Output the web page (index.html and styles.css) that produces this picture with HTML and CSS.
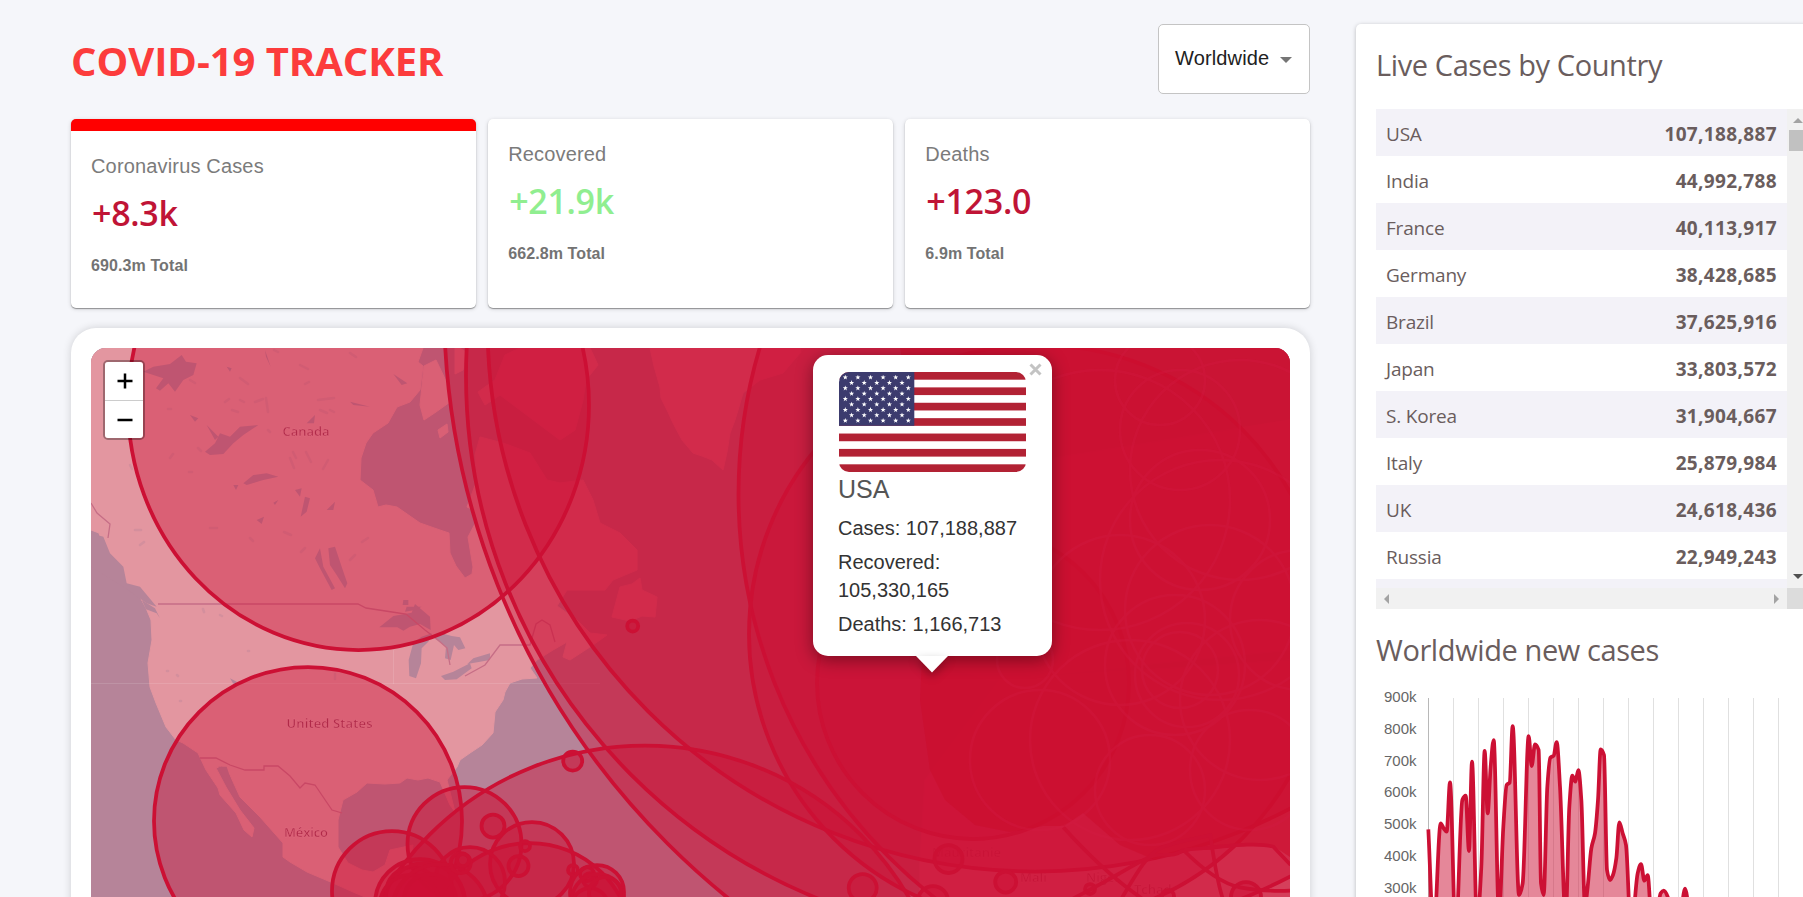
FILE: index.html
```html
<!DOCTYPE html>
<html lang="en">
<head>
<meta charset="utf-8">
<title>COVID-19 Tracker</title>
<link rel="stylesheet" href="styles.css">
</head>
<body>
<div class="app">
  <main class="main">
    <header class="header">
      <h1 class="brand">COVID-19 TRACKER</h1>
      <div class="select"><span>Worldwide</span><i class="caret"></i></div>
    </header>
    <section class="stats">
      <article class="card card-active">
        <p class="card-title">Coronavirus Cases</p>
        <h2 class="card-num">+8.3k</h2>
        <p class="card-total">690.3m Total</p>
      </article>
      <article class="card">
        <p class="card-title">Recovered</p>
        <h2 class="card-num green">+21.9k</h2>
        <p class="card-total">662.8m Total</p>
      </article>
      <article class="card">
        <p class="card-title">Deaths</p>
        <h2 class="card-num">+123.0</h2>
        <p class="card-total">6.9m Total</p>
      </article>
    </section>
    <section class="map-card">
      <div class="map">
        <svg class="map-svg" viewBox="91 348 1199 549" width="1199" height="549">
          <rect class="sea" x="91" y="348" width="1199" height="549"/>
          <path class="land" d="M91 348H423L418 362 423 366 420 390 410 402 397 407 388 423 373 433 366 443 361 458 360 480 373 490 378 507 386 505 397 507 420 523 440 530 449 533 450 553 456 566 465 578 472 574 473 567 468 537 477 520 474 510 467 507 477 480 475 455 480 437 503 443 530 453 547 480 560 483 583 480 593 500 600 523 620 533 637 550 637 570 613 580 605 590 567 590 557 606 577 620 590 633 607 635 593 645 570 660 563 657 567 642 553 650 537 660 530 668 537 678 522 679 510 683 505 692 503 700 495 712 493 733 482 745 470 753 460 760 457 767 447 780 455 812 450 805 440 782 428 778 418 780 407 778 400 783 385 784 367 783 357 792 343 800 338 820 338 847 348 863 362 870 373 872 385 865 390 850 413 845 410 863 412 875 440 890 440 897H365L353 892 333 883 307 872 290 862 283 857 283 843 260 817 240 797 230 775 222 766 216 768 226 787 240 810 254 828 252 837 244 830 236 813 220 795 218 788 206 770 198 753 183 743 176 740 166 727 156 703 150 687 148 663 152 640 151 620 146 608 140 597 125 583 120 567 103 547 99 533 91 530Z"/>
          <path class="land" d="M424 366 436 360 448 385 450 402 436 412 424 420 420 405ZM438 430 447 424 448 432 440 438ZM478 392 495 380 505 355 520 348H590L598 365 586 380 583 400 575 430 560 440 540 425 520 410 500 395 485 405ZM650 348 654 366 660 387 661 398 668 412 673 423 682 440 693 453 702 456 712 460 723 470 727 452 730 433 735 420 738 410 743 393 760 380 783 373 800 353 800 348ZM620 587 632 584 640 578 642 590 657 597 655 617 642 616 630 621 612 617ZM455 345 466 352 463 370 455 374ZM925 780 1000 680 1290 660V897H920V860ZM880 520 980 470 1290 420V650L990 680 900 650Z"/>
          <!-- Great Lakes and inland water -->
          <g class="sea" transform="translate(60 600) scale(.33333)">
            <path d="M958 82 1000 48 1055 38 1065 12 1110 50 1112 90 1080 72 1050 80 1030 92 1012 82ZM1046 180 1060 128 1085 110 1115 100 1105 125 1085 145 1083 190 1068 235 1048 228ZM1115 108 1145 100 1175 108 1200 112 1216 145 1195 150 1182 135 1172 180 1155 175 1158 140 1130 120ZM1143 228 1180 215 1230 190 1235 205 1190 238 1155 240ZM1222 192 1240 175 1290 160 1290 180ZM510 235 530 245 525 260ZM245 0 285 25 300 55 290 40 258 28ZM1030 0 1045 0 1045 15 1028 15Z"/>
            <path d="M475 500 500 500 520 560 505 565Z"/>
          </g>
          <g class="sea" transform="translate(60 320) scale(.33333)">
            <path d="M250 155 280 140 330 132 365 105 378 125 410 130 400 165 370 180 345 215 325 190 300 212 288 205 310 175ZM435 395 465 370 480 340 510 350 540 320 595 315 550 345 520 370 490 402 450 405ZM440 315 475 350 465 360ZM550 490 580 465 620 460 655 470 610 480 560 495ZM735 530 750 535 740 575 722 590ZM805 685 825 680 845 740 862 790 855 805 830 765 810 735ZM780 685 790 740 825 805 815 810 780 745 765 715ZM1000 162 1042 190 1025 195ZM740 310 765 285 762 310ZM870 245 930 260 880 255ZM390 285 415 295 405 305ZM500 140 515 145 510 155ZM615 90 632 140 618 110ZM640 548 655 540 645 555ZM590 600 612 590 605 612ZM800 570 825 545 820 570ZM1040 860 1085 860 1065 870 1035 875ZM705 510 725 505 720 530ZM520 495 535 495 528 510ZM93 640 130 650 150 700 190 740 200 790 240 800 290 860 260 850 190 800 93 740Z"/>
          </g>
          <g class="specks">
            <path d="M190 380l5 3M225 402l4-3M240 378l8 6M232 410l6 2M255 402l8-3M266 398l2 14M318 400l16-2M320 410l7 3M300 365l8 4M350 353l6 4M290 458l4 10M306 452l5 10M328 460l-5 9M198 448l3 3M168 409h3M170 458l3-4M189 472h3M284 532l7 3M210 528h7M362 542l6-4M350 560l5-5M274 350l4 2M240 400l4 2M250 538l3 3M135 530h6M140 545l4-3M305 548l-4 4M130 465l2 4M305 384l4-2M293 452l3 6M330 410l4 2M268 430l2 2M177 675l1 1M167 671h1M180 701h1M248 651h1M203 609l1 3M220 615l2 1M335 674v5"/>
          </g>
          <path class="border" d="M158 604H358L366 608 392 612 406 614 425 630 438 640 447 648 450 665M465 676 485 665 500 645H530L536 624 542 620 550 625 555 642M200 758H216L230 765 245 770H264V766H278L290 776 300 788 305 783 315 785 332 810 342 813M91 503 97 513 110 524 108 538"/>
          <path class="tile" d="M91 683.500H600M393.500 650V684"/>
          <g class="place">
            <text x="282.500" y="436" textLength="47">Canada</text>
            <text x="286.500" y="727.500" textLength="86">United States</text>
            <text x="284" y="837" textLength="44">México</text>
            <text x="1020" y="882">Mali</text><text x="1086" y="882">Niger</text><text x="1134" y="894">Tchad</text><text x="932" y="857">Mauritanie</text>
          </g>
          <g class="ring">
            <ellipse cx="358.500" cy="405" rx="230.500" ry="245"/>
            <circle cx="308" cy="821" r="154"/>
            <circle cx="1207" cy="304" r="763"/>
            <circle cx="1030" cy="376" r="564"/>
            <circle cx="1035" cy="324" r="547.500"/>
            <circle cx="1252" cy="494" r="513.500"/>
            <circle cx="1038" cy="634" r="289"/>
            <circle cx="645" cy="1050.500" r="305"/>
            <circle cx="464.500" cy="844" r="57"/>
            <circle cx="392" cy="891" r="60"/>
            <circle cx="532" cy="864" r="42"/>
            <circle cx="530" cy="945" r="102"/>
            <circle cx="470" cy="882" r="35"/>
            <circle cx="420" cy="904" r="45"/><circle cx="412" cy="893" r="26"/><circle cx="425" cy="903" r="40"/>
            <circle cx="410" cy="905" r="30"/><circle cx="430" cy="900" r="26"/><circle cx="440" cy="912" r="48"/>
            <circle cx="493" cy="826" r="11.500"/>
            <circle cx="572.700" cy="761" r="9.500"/>
            <circle cx="632.700" cy="626" r="5.500"/>
            <circle cx="460.700" cy="863" r="10"/><circle cx="463" cy="860" r="6"/>
            <circle cx="518.500" cy="866" r="10"/><circle cx="525" cy="846" r="5"/>
            <circle cx="573" cy="870" r="5"/><circle cx="587" cy="874" r="7"/><circle cx="590" cy="880" r="7"/>
            <circle cx="597" cy="892" r="27"/><circle cx="598" cy="900" r="26"/><circle cx="590" cy="906" r="18"/><circle cx="605" cy="893" r="16"/>
            <circle cx="862.700" cy="888" r="14"/>
            <circle cx="948.500" cy="859" r="14"/>
            <circle cx="1005.700" cy="882" r="10.500"/>
            <circle cx="933" cy="901" r="15"/>
            <circle cx="1090" cy="889" r="5"/>
            <circle cx="1168" cy="896" r="6"/>
            <circle cx="1246" cy="897" r="15"/>
          </g>
          <!-- overlapping European and African markers -->
          <circle class="soft" cx="973" cy="683" r="156"/>
          <path class="dense" d="M900 348H1290V857L1275 847 1250 844 1210 850 1180 850 1155 860 1120 845 1083 813 1064 826 1043 826 1010 832 975 825 945 800 930 770 920 700 925 600 930 520Z"/>
          <g class="arcs" transform="translate(840 600) scale(.33333)">
            <path d="M670 682C740 760 810 830 905 895M845 895C890 820 920 765 960 745S1080 715 1110 705M1110 700C1122 780 1130 840 1148 895M1030 750C1080 800 1140 850 1200 862S1300 874 1352 872M700 895C790 850 870 800 920 775S990 780 1030 750M1030 750C1150 740 1250 725 1300 740L1352 795"/>
          </g>
          <g class="curls">
            <circle cx="1180" cy="670" r="38"/><circle cx="1187" cy="675" r="52"/><circle cx="1175" cy="665" r="70"/><circle cx="1040" cy="760" r="70"/><circle cx="1130" cy="740" r="100"/><circle cx="1220" cy="580" r="120"/><circle cx="1200" cy="520" r="70"/><circle cx="1180" cy="430" r="60"/><circle cx="1240" cy="470" r="110"/><circle cx="1100" cy="500" r="130"/><circle cx="1260" cy="700" r="80"/><circle cx="1210" cy="610" r="85"/><circle cx="1120" cy="620" r="85"/><circle cx="1250" cy="770" r="60"/><circle cx="1160" cy="380" r="45"/><circle cx="1025" cy="660" r="28"/><circle cx="1150" cy="790" r="55"/><circle cx="1300" cy="620" r="70"/>
          </g>
        </svg>
        <div class="zoom">
          <span><svg width="16" height="16" viewBox="0 0 16 16"><path d="M8 .5V15.500M.5 8H15.500"/></svg></span>
          <span><svg width="16" height="16" viewBox="0 0 16 16"><path d="M.5 8H15.500"/></svg></span>
        </div>
        <div class="popup">
          <svg class="close" width="13" height="13" viewBox="0 0 13 13"><path d="M1.500 1.500 11.500 11.500M11.500 1.500 1.500 11.500"/></svg>
          <svg class="flag" width="187" height="100" viewBox="0 0 187 100" preserveAspectRatio="none">
            <rect width="187" height="100" fill="#fff"/>
            <g id="stripes" fill="#b22234"></g>
            <rect width="75.300" height="53.800" fill="#3c3b6e"/>
            <g id="stars" fill="#fff"></g>
          </svg>
          <p class="pop-name">USA</p>
          <p class="pop-line">Cases: 107,188,887</p>
          <p class="pop-line">Recovered: 105,330,165</p>
          <p class="pop-line">Deaths: 1,166,713</p>
          <svg class="tip" width="32" height="17" viewBox="0 0 32 17"><path d="M0 0H32L16 16.500Z" fill="#fff"/></svg>
        </div>
      </div>
    </section>
  </main>
  <aside class="side">
    <h3 class="side-title">Live Cases by Country</h3>
    <div class="table-wrap">
      <div class="rows">
        <div class="row"><span>USA</span><b>107,188,887</b></div>
        <div class="row"><span>India</span><b>44,992,788</b></div>
        <div class="row"><span>France</span><b>40,113,917</b></div>
        <div class="row"><span>Germany</span><b>38,428,685</b></div>
        <div class="row"><span>Brazil</span><b>37,625,916</b></div>
        <div class="row"><span>Japan</span><b>33,803,572</b></div>
        <div class="row"><span>S. Korea</span><b>31,904,667</b></div>
        <div class="row"><span>Italy</span><b>25,879,984</b></div>
        <div class="row"><span>UK</span><b>24,618,436</b></div>
        <div class="row"><span>Russia</span><b>22,949,243</b></div>
        <div class="row"></div>
      </div>
      <div class="vbar"><i class="up"></i><i class="thumb"></i><i class="down"></i></div>
      <div class="hbar"><i class="left"></i><i class="right"></i></div>
      <div class="corner"></div>
    </div>
    <h3 class="side-title second">Worldwide new cases</h3>
    <svg class="chart" width="427" height="217" viewBox="1376 680 427 217">
      <g id="grid"></g>
      <path id="area" class="area"/>
      <path id="line" class="line"/>
    </svg>
  </aside>
</div>
<script src="main.js"></script>
</body>
</html>
```
FILE: styles.css
```css
* { box-sizing: border-box; }
body { margin: 0; width: 1803px; height: 897px; overflow: hidden; background: #f5f6fa; font-family: "Liberation Sans", Arial, sans-serif; }
h1, h2, h3, p { margin: 0; }
.app { display: flex; height: 897px; padding: 24px 0 0 71px; overflow: hidden; }
.main { width: 1239px; flex: none; margin-right: 46px; }
.header { display: flex; justify-content: space-between; height: 95px; }
.brand { font: 700 40px/74px "Open Sans", "Noto Sans", sans-serif; color: #fc3c3c; letter-spacing: -0.050px; white-space: nowrap; }
.select { display: flex; align-items: center; width: 152px; height: 70px; padding: 0 17px 2px 16px; justify-content: space-between; background: #fff; border: 1px solid #c4c4c4; border-radius: 5px; font-size: 20px; letter-spacing: .15px; color: #212121; }
.caret { border: 6px solid transparent; border-top-color: #757575; border-bottom: 0; margin-top: 3px; }
.stats { display: flex; gap: 12.500px; }
.card { flex: 1; height: 189px; padding: 20px; background: #fff; border-radius: 5px; box-shadow: 0 1px 1px rgba(0,0,0,.35), 0 1px 4px rgba(0,0,0,.16); }
.card-active { border-top: 12px solid #f00; }
.card-title { font-size: 20px; line-height: 30px; letter-spacing: .16px; color: #7b7b7b; }
.card-num { margin: 8px 0 0 1px; font: 600 34px/48px "Open Sans", "Noto Sans", sans-serif; letter-spacing: -.3px; color: #c01436; }
.green { color: #90ee90; }
.card-total { margin-top: 18px; font-size: 16px; line-height: 22px; font-weight: 700; letter-spacing: .1px; color: #737373; }
.map-card { margin-top: 20px; height: 700px; padding: 20px; background: #fff; border-radius: 25px; box-shadow: 0 0 8px rgba(0,0,0,.16); }
.map { position: relative; height: 660px; border-radius: 15px 15px 0 0; overflow: hidden; background: #b88699; }
.map-svg { display: block; }
.sea { fill: #b68499; }
.land { fill: #e396a0; stroke: #e396a0; stroke-width: 1; stroke-linejoin: round; }
.specks { stroke: #b68499; stroke-width: 2.500; opacity: .35; fill: none; stroke-linecap: round; }
.border { fill: none; stroke: #c66e86; stroke-width: 1.300; }
.tile { fill: none; stroke: #fff; opacity: .12; }
.place { font: 600 13px "Open Sans", "Noto Sans", sans-serif; fill: #97324f; stroke: #eeb0b8; stroke-width: .3px; opacity: .9; }
.ring { fill: #cc1034; fill-opacity: .4; stroke: #cc1034; stroke-width: 3.750; }
.soft { fill: #cc1034; fill-opacity: .4; stroke: #cc1034; stroke-width: 3.750; }
.dense { fill: #cc0d2d; opacity: .6; }
.arcs { fill: none; stroke: #cc1034; stroke-width: 11; }
.curls { fill: none; stroke: #d31c44; stroke-width: 2.500; opacity: .3; }
.zoom { position: absolute; left: 12px; top: 12px; width: 42px; border: 2px solid rgba(0,0,0,.3); border-radius: 5px; background-clip: padding-box; }
.zoom span { display: flex; align-items: center; justify-content: center; height: 37px; padding-left: 2px; background: #fff; border-radius: 0 0 3px 3px; }
.zoom span:first-child { height: 39px; border-bottom: 1px solid #ccc; border-radius: 3px 3px 0 0; }
.zoom path { stroke: #000; stroke-width: 2.500; }
.popup { position: absolute; left: 722px; top: 6.500px; width: 239px; height: 301px; padding: 17.500px 26px 0; background: #fff; border-radius: 15px; box-shadow: 0 4px 17px rgba(0,0,0,.4); }
.close { position: absolute; right: 10px; top: 8px; }
.close path { stroke: #c3c3c3; stroke-width: 3; }
.flag { display: block; border-radius: 10px; margin-left: -.5px; }
.tip { position: absolute; left: 103px; top: 301px; filter: drop-shadow(0 4px 5px rgba(0,0,0,.3)); }
.pop-name { font-size: 25px; line-height: 34px; margin-left: -1px; color: #555; }
.pop-line { font-size: 20px; line-height: 28px; margin: 6px 0 0 -1px; color: #333; }
.pop-name + .pop-line { margin-top: 8px; }
.side { width: 520px; flex: none; height: 1000px; padding: 20px; background: #fff; border-radius: 5px; box-shadow: 0 1px 4px rgba(0,0,0,.25); color: #6a5d5d; }
.side-title { font: 400 29px/42px "Open Sans", "Noto Sans", sans-serif; letter-spacing: -.4px; white-space: nowrap; }
.second { margin-top: 20px; }
.table-wrap { display: grid; grid-template: 479px 21px / 411px 21px; margin-top: 23px; }
.rows { overflow: hidden; }
.row { display: flex; justify-content: space-between; height: 47px; padding: 0 10px 0 10px; font: 400 19px/51px "Open Sans", "Noto Sans", sans-serif; letter-spacing: -.2px; }
.row b { font-weight: 700; letter-spacing: .36px; }
.row:nth-child(odd) { background: #f3f2f8; }
.vbar, .hbar { background: #f1f1f1; }
.vbar { display: flex; flex-direction: column; align-items: center; padding: 9px 0; }
.hbar { display: flex; justify-content: space-between; align-items: center; padding: 0 8px; }
.corner { background: #dcdcdc; }
.up, .down { border: 5px solid transparent; }
.up { border-top: 0; border-bottom-color: #a3a3a3; }
.down { border-bottom: 0; border-top-color: #505050; margin-top: auto; }
.thumb { width: 17px; height: 21px; margin-top: 7px; background: #c1c1c1; flex: none; }
.left, .right { border: 5px solid transparent; }
.left { border-left: 0; border-right-color: #a3a3a3; }
.right { border-right: 0; border-left-color: #a3a3a3; }
.chart { display: block; margin-top: 9px; }
.chart text { font: 15px "Liberation Sans", Arial, sans-serif; fill: #666; text-anchor: end; }
.gridline { stroke: #e0e0e0; stroke-width: 1; }
.axis { stroke: #b8b8b8; stroke-width: 1; }
.area { fill: rgba(204,16,52,.5); }
.line { fill: none; stroke: #cc1034; stroke-width: 3.750; stroke-linejoin: round; }
```
FILE: main.js
```js
const NS = "http://www.w3.org/2000/svg";
function add(parent, tag, attrs, text) {
  const el = document.createElementNS(NS, tag);
  for (const k in attrs) el.setAttribute(k, attrs[k]);
  if (text) el.textContent = text;
  document.getElementById(parent).appendChild(el);
}

// Flag: seven red stripes and fifty stars
for (let i = 0; i < 13; i += 2) add("stripes", "rect", { x: 0, y: i * 100 / 13, width: 187, height: 100 / 13 });
for (let r = 0; r < 9; r++) {
  for (let c = 0; c < (r % 2 ? 5 : 6); c++) {
    const cx = 6.3 + c * 12.6 + (r % 2 ? 6.3 : 0), cy = 5.4 + r * 5.4;
    const pts = [];
    for (let k = 0; k < 10; k++) {
      const a = -Math.PI / 2 + k * Math.PI / 5, d = k % 2 ? 1.1 : 2.7;
      pts.push((cx + d * Math.cos(a)).toFixed(2) + "," + (cy + d * Math.sin(a)).toFixed(2));
    }
    add("stars", "polygon", { points: pts.join(" ") });
  }
}

// Chart grid and labels
for (let i = 0; i < 15; i++) {
  add("grid", "line", { class: i ? "gridline" : "axis", x1: 1428.5 + i * 25, x2: 1428.5 + i * 25, y1: 698, y2: 900 });
}
for (let i = 0; i < 7; i++) add("grid", "text", { x: 1416.5, y: 702 + i * 31.8 }, (9 - i) * 100 + "k");

// Daily values as plot points, joined by a monotone curve
const raw = [[265,688],[281,1000],[302,670],[311,685],[320,695],[330,547],[347,1010],[367,600],[377,587],[387,753],[396,485],[411,970],[424,800],[434,453],[443,640],[452,500],[461,420],[477,950],[490,680],[500,555],[509,548],[518,378],[537,885],[548,850],[566,408],[575,498],[585,433],[596,450],[603,850],[611,885],[622,560],[631,473],[641,467],[650,426],[660,560],[677,960],[688,620],[697,527],[706,545],[715,510],[724,600],[735,920],[743,860],[754,745],[765,700],[774,600],[782,448],[792,465],[801,810],[810,840],[819,825],[829,775],[838,667],[848,700],[858,735],[873,1000],[893,820],[903,792],[913,842],[923,825],[935,960],[950,940],[962,880],[971,872],[983,890],[1000,1000],[1020,960],[1035,866],[1052,980]];
const p = raw.map(([x, y]) => [1340 + x / 3, 600 + y / 3]);
const slope = p.slice(1).map((q, i) => (q[1] - p[i][1]) / (q[0] - p[i][0]));
const m = p.map((_, i) => {
  if (i === 0) return slope[0];
  if (i === p.length - 1) return slope[i - 1];
  const a = slope[i - 1], b = slope[i];
  return a * b <= 0 ? 0 : 2 * a * b / (a + b);
});
let d = "M" + p[0];
for (let i = 1; i < p.length; i++) {
  const h = (p[i][0] - p[i - 1][0]) / 3;
  d += `C${p[i-1][0] + h},${p[i-1][1] + m[i-1] * h} ${p[i][0] - h},${p[i][1] - m[i] * h} ${p[i]}`;
}
document.getElementById("line").setAttribute("d", d);
document.getElementById("area").setAttribute("d", d + "V960H1428.5Z");
```
